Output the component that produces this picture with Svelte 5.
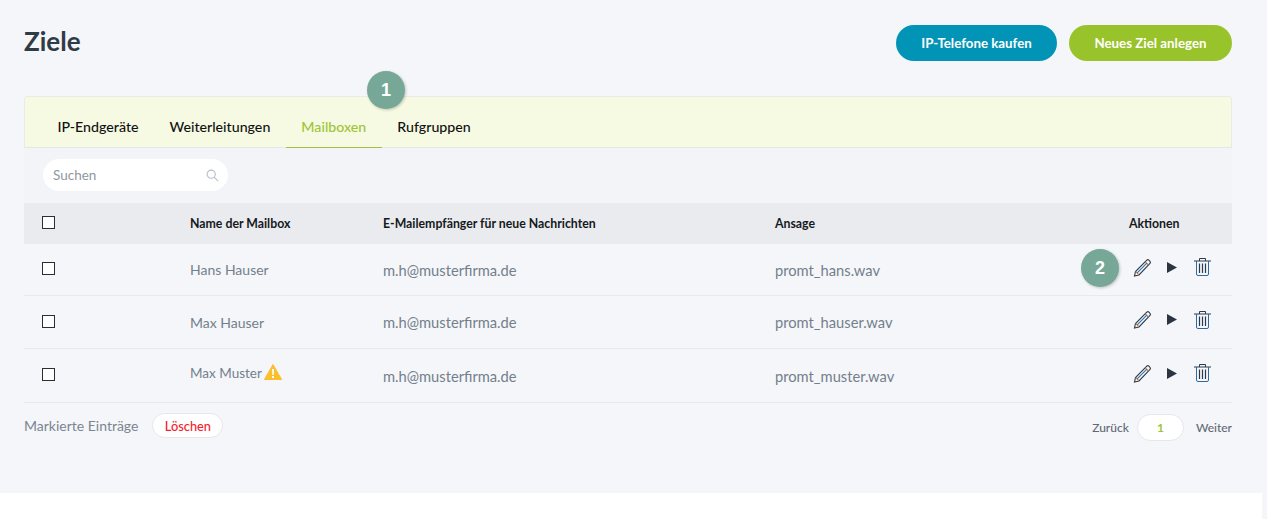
<script>
  const tabs = ['IP-Endgeräte', 'Weiterleitungen', 'Mailboxen', 'Rufgruppen'];
  const active = 'Mailboxen';

  const rows = [
    { name: 'Hans Hauser', mail: 'm.h@musterfirma.de', file: 'promt_hans.wav', h: 52, badge: true },
    { name: 'Max Hauser', mail: 'm.h@musterfirma.de', file: 'promt_hauser.wav', h: 53 },
    { name: 'Max Muster', mail: 'm.h@musterfirma.de', file: 'promt_muster.wav', h: 54, warn: true }
  ];
</script>

<div class="page">
  <header class="top">
    <h1>Ziele</h1>
    <div class="top-buttons">
      <button class="btn blue">IP-Telefone kaufen</button>
      <button class="btn green">Neues Ziel anlegen</button>
    </div>
  </header>

  <section class="card">
    <span class="badge tab-badge">1</span>
    <nav class="tabs">
      {#each tabs as tab}
        <div class="tab" class:active={tab === active}>{tab}</div>
      {/each}
    </nav>

    <div class="filter">
      <div class="search">
        <span>Suchen</span>
        <svg width="13" height="13" viewBox="0 0 14 14" fill="none" stroke="#b4c0cb" stroke-width="1.2">
          <circle cx="5.6" cy="5.6" r="4.4" />
          <path d="M8.8 8.8 13 13" />
        </svg>
      </div>
    </div>

    <div class="row head">
      <div class="cell-check"><span class="check"></span></div>
      <div>Name der Mailbox</div>
      <div>E-Mailempfänger für neue Nachrichten</div>
      <div class="ansage">Ansage</div>
      <div>Aktionen</div>
    </div>

    {#each rows as r}
      <div class="row item" style="height: {r.h}px">
        <div class="cell-check"><span class="check"></span></div>
        <div class="name" class:raised={r.warn}>
          {r.name}
          {#if r.warn}
            <svg class="warn" width="18" height="16" viewBox="0 0 18 16">
              <path d="M9 .5 17.6 15.5H.4Z" fill="#fbbf2d" stroke="#fbbf2d" stroke-linejoin="round" />
              <path d="M8 5h2l-.3 6H8.3ZM8 12.1h2V14H8Z" fill="#fff" />
            </svg>
          {/if}
        </div>
        <div class="value">{r.mail}</div>
        <div class="value ansage">{r.file}</div>
        <div class="actions">
          {#if r.badge}<span class="badge row-badge">2</span>{/if}
          <svg class="pencil" width="19" height="19" viewBox="0 0 19 19" fill="none" stroke-width="1.1">
            <path d="M6 17 1.5 18l1-4.500L13.800 2.200a1.500 1.500 0 0 1 2.100 0l1.100 1.100a1.500 1.500 0 0 1 0 2.100Z" stroke="#2d3a4a" />
            <path d="M12.200 3.800l3.200 3.200M2.700 13.400l3.100 3.200" stroke="#c9772c" />
            <path d="M4.200 14.800l9.600-9.600" stroke="#2f74b5" />
          </svg>
          <svg class="play" width="10" height="11" viewBox="0 0 10 11">
            <path d="M0 0 10 5.500 0 11Z" fill="#2b3440" />
          </svg>
          <svg class="trash" width="17" height="18" viewBox="0 0 17 18" fill="none" stroke="#2d3a4a" stroke-width="1">
            <path d="M0 3h17M5.500 3V.5h6V3" />
            <path d="M2.500 3v13a1.500 1.500 0 0 0 1.500 1.500h9a1.500 1.500 0 0 0 1.500-1.500V3" stroke="#2c6aa5" />
            <path d="M5.500 5.500v9.500M8.500 5.500v9.500M11.500 5.500v9.500" stroke-width="1.200" />
          </svg>
        </div>
      </div>
    {/each}
  </section>

  <div class="bottom">
    <div class="marked">
      <span>Markierte Einträge</span>
      <button class="delete">Löschen</button>
    </div>
    <div class="pager">
      <span>Zurück</span>
      <span class="current">1</span>
      <span>Weiter</span>
    </div>
  </div>
</div>
<div class="foot"></div>

<style>
  :global(body) {
    background: #f5f6f9;
    font-family: "Lato", "Noto Sans", sans-serif;
    overflow: hidden;
  }

  .page {
    height: 493px;
    box-sizing: border-box;
    padding: 25px 35px 0 24px;
  }

  .foot {
    height: 26px;
    margin-right: 5px;
    background: #fff;
  }

  .top {
    display: flex;
    justify-content: space-between;
    align-items: flex-start;
    height: 71px;
  }

  h1 {
    margin: 0;
    font-size: 26px;
    line-height: 32px;
    font-weight: 700;
    color: #2f3b45;
  }

  .top-buttons {
    display: flex;
    gap: 12px;
  }

  .btn {
    height: 36px;
    border: none;
    border-radius: 18px;
    color: #fff;
    font: 700 13.3px "Lato", sans-serif;
    padding: 0;
  }

  .blue { width: 161px; background: #0194b6; }
  .green { width: 163px; background: #99c32a; }

  .card {
    position: relative;
  }

  .badge {
    position: absolute;
    width: 38px;
    height: 38px;
    border-radius: 50%;
    background: #77a897;
    color: #fff;
    font: 700 18px/38px "Liberation Sans", sans-serif;
    text-align: center;
    box-shadow: 1px 1px 3px rgba(0, 0, 0, 0.22);
  }

  .tab-badge {
    left: 343px;
    top: -25px;
    z-index: 2;
  }

  .row-badge {
    left: -48px;
    top: -9px;
  }

  .tabs {
    display: flex;
    height: 52px;
    box-sizing: border-box;
    padding: 0 0 0 17px;
    background: #f6fae2;
    border: 1px solid #e8ebe6;
    border-bottom: 1px solid #e4e7e4;
    border-radius: 4px 4px 0 0;
  }

  .tab {
    display: flex;
    align-items: center;
    padding: 9px 15.5px 0;
    margin-bottom: -1px;
    font-size: 14.2px;
    font-weight: 500;
    color: #111;
    border-bottom: 1px solid transparent;
  }

  .tab.active {
    color: #a0c436;
    border-bottom-color: #a4bf4e;
  }

  .filter {
    height: 55px;
    box-sizing: border-box;
    padding-top: 11px;
    padding-left: 19px;
    background: #f2f4f7;
  }

  .search {
    width: 185px;
    height: 32px;
    box-sizing: border-box;
    display: flex;
    align-items: center;
    justify-content: space-between;
    padding: 0 9px 0 10px;
    background: #fff;
    border-radius: 16px;
    font-size: 13.5px;
    color: #8f979f;
  }

  .row {
    display: grid;
    grid-template-columns: 166px 193px 391px 355px 1fr;
    align-items: center;
  }

  .head {
    height: 41px;
    background: #e9ebee;
    font-size: 12.3px;
    font-weight: 700;
    color: #15191d;
  }

  .item {
    box-sizing: border-box;
    border-bottom: 1px solid #e7e9eb;
    font-size: 14px;
    color: #737f8c;
  }

  .value {
    font-size: 14.7px;
  }

  .ansage {
    padding-left: 1px;
  }

  .cell-check {
    display: flex;
    padding-left: 18px;
  }

  .check {
    width: 13px;
    height: 13px;
    box-sizing: border-box;
    border: 1px solid #2b2f33;
    background: #fff;
    transform: translateY(-1px);
  }

  .name.raised {
    font-size: 13.5px;
    transform: translateY(-3px);
  }

  .warn {
    vertical-align: -2px;
    margin-left: -1px;
  }

  .actions {
    position: relative;
    display: flex;
    align-items: center;
    height: 19px;
    margin-top: -5px;
    padding-left: 4px;
  }

  .pencil { margin-right: 15px; }
  .play { margin-right: 17px; }

  .bottom {
    display: flex;
    justify-content: space-between;
    align-items: flex-start;
    padding-top: 10px;
  }

  .marked {
    display: flex;
    align-items: center;
    gap: 14px;
    font-size: 14px;
    color: #7a8591;
  }

  .delete {
    width: 71px;
    height: 25px;
    padding: 0;
    background: #fff;
    border: 1px solid #e5e7e9;
    border-radius: 13px;
    font: 500 12.8px "Lato", sans-serif;
    color: #f5222d;
  }

  .pager {
    display: flex;
    align-items: center;
    gap: 8px;
    font-size: 12px;
    font-weight: 500;
    color: #5f6a75;
    margin-top: 1px;
  }

  .current {
    width: 47px;
    height: 27px;
    box-sizing: border-box;
    margin-right: 4px;
    background: #fff;
    border: 1px solid #e5e7e9;
    border-radius: 14px;
    text-align: center;
    line-height: 25px;
    font-weight: 700;
    color: #a0c436;
  }
</style>
